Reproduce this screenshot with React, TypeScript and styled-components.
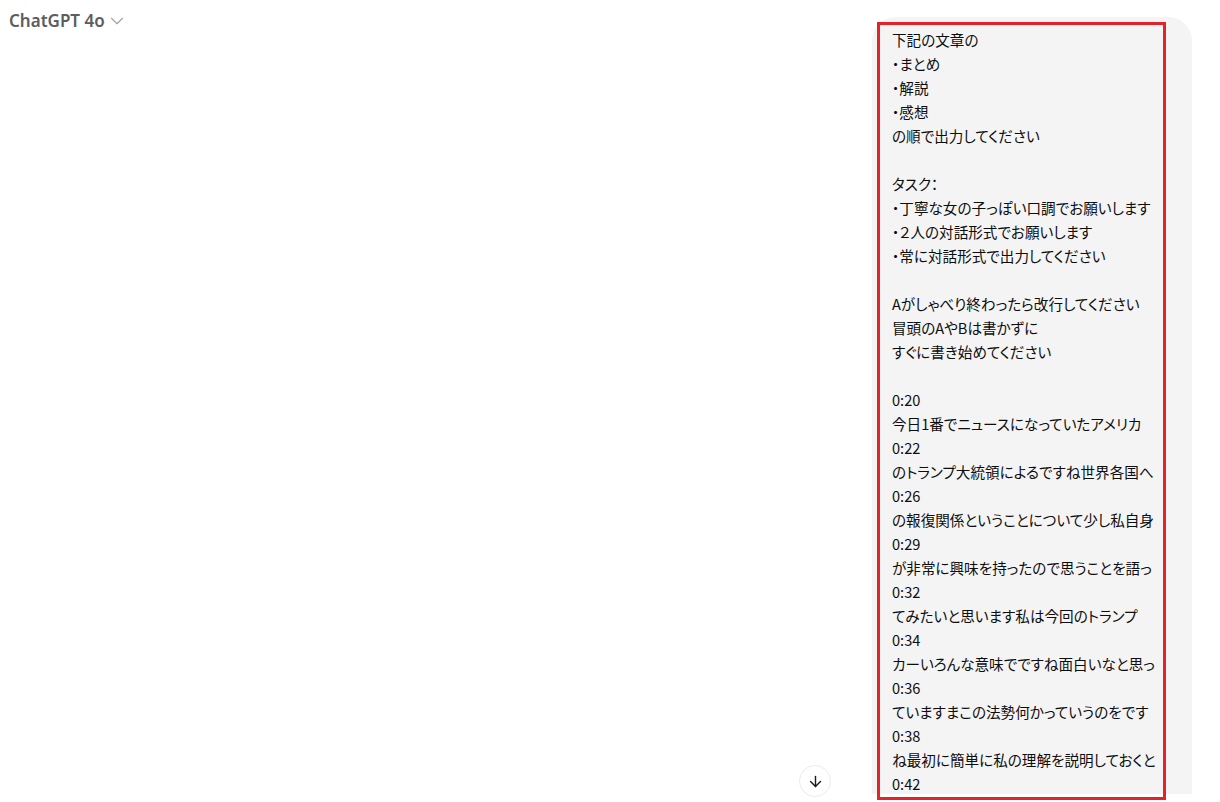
import React from 'react';
import styled, {createGlobalStyle} from "styled-components";
import {ArrowDown, ChevronDown} from "lucide-react";

const lines = [
    "下記の文章の",
    "・まとめ",
    "・解説",
    "・感想",
    "の順で出力してください",
    "",
    "タスク：",
    "・丁寧な女の子っぽい口調でお願いします",
    "・２人の対話形式でお願いします",
    "・常に対話形式で出力してください",
    "",
    "Aがしゃべり終わったら改行してください",
    "冒頭のAやBは書かずに",
    "すぐに書き始めてください",
    "",
    "0:20",
    "今日1番でニュースになっていたアメリカ",
    "0:22",
    "のトランプ大統領によるですね世界各国へ",
    "0:26",
    "の報復関係ということについて少し私自身",
    "0:29",
    "が非常に興味を持ったので思うことを語っ",
    "0:32",
    "てみたいと思います私は今回のトランプ",
    "0:34",
    "カーいろんな意味でですね面白いなと思っ",
    "0:36",
    "ていますまこの法勢何かっていうのをです",
    "0:38",
    "ね最初に簡単に私の理解を説明しておくと",
    "0:42",
    "",
];

export default function App() {
    return (
        <Page>
            <GlobalStyle/>
            <Layout>
                <ModelPicker>
                    ChatGPT 4o
                    <ChevronDown size={22} strokeWidth={1.2} color="#a0a0a0"/>
                </ModelPicker>
                <Thread>
                    <Bubble>
                        {lines.map((line, i) => (
                            <Line key={i}>{line || "\u00a0"}</Line>
                        ))}
                    </Bubble>
                </Thread>
            </Layout>
            <Highlight/>
            <ScrollDown>
                <ArrowDown size={17} strokeWidth={2} color="#1a1a1a"/>
            </ScrollDown>
        </Page>
    );
}

const GlobalStyle = createGlobalStyle`
  html, body {
    margin: 0;
    padding: 0;
    background: #ffffff;
    overflow: hidden;
  }

  body {
    font-family: "Noto Sans", "Noto Sans CJK JP", sans-serif;
    color: #0d0d0d;
  }
`

const Page = styled.div`
  position: relative;
  width: 1220px;
  height: 802px;
  overflow: hidden;
  background: #ffffff;
`

const Layout = styled.div`
  display: flex;
  justify-content: space-between;
  align-items: flex-start;
  height: 794px;
  overflow: hidden;
`

const ModelPicker = styled.div`
  display: flex;
  align-items: center;
  gap: 1px;
  padding: 8px 0 0 9px;
  font-size: 17px;
  font-weight: 600;
  color: #5d5d5d;
  line-height: 26px;
`

const Thread = styled.div`
  padding: 17px 28px 0 0;
`

const Bubble = styled.div`
  width: 280px;
  padding: 11px 20px 10px;
  background: #f4f4f4;
  border-radius: 24px 24px 0 0;
  font-family: "Noto Sans CJK JP", sans-serif;
  font-size: 14.6px;
  font-feature-settings: "palt";
  line-height: 24px;
  color: #0d0d0d;
`

const Line = styled.div`
  white-space: pre;
  height: 24px;
`

const Highlight = styled.div`
  position: absolute;
  left: 877px;
  top: 22px;
  width: 289px;
  height: 778px;
  box-sizing: border-box;
  border: 3.5px solid #e5222a;
  pointer-events: none;
`

const ScrollDown = styled.button`
  position: absolute;
  left: 799px;
  top: 765px;
  width: 32px;
  height: 32px;
  padding: 0;
  border-radius: 50%;
  border: 1px solid #ececec;
  background: #ffffff;
  display: flex;
  align-items: center;
  justify-content: center;
`
